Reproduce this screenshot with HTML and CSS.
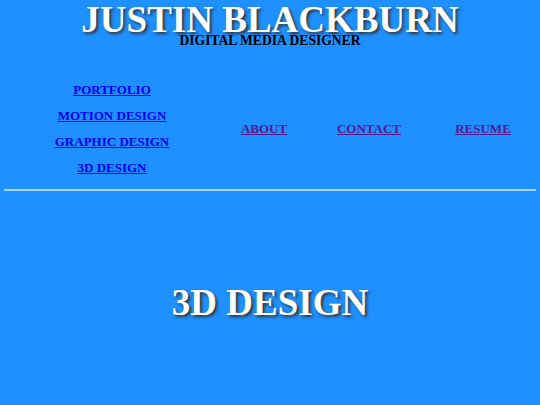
FILE: index.html
```html
<!DOCTYPE html>
<html>
<head>
<meta charset="utf-8">
<link rel="stylesheet" href="styles.css">
</head>
<body>
<header class="head">
  <h1 class="title">JUSTIN BLACKBURN</h1>
  <p class="subtitle">DIGITAL MEDIA DESIGNER</p>
</header>
<nav class="nav">
  <div class="col col-main">
    <a class="link" href="#portfolio">PORTFOLIO</a>
    <a class="link" href="#motion">MOTION DESIGN</a>
    <a class="link" href="#graphic">GRAPHIC DESIGN</a>
    <a class="link" href="#3d">3D DESIGN</a>
  </div>
  <div class="col"><a class="link visited" href="#about">ABOUT</a></div>
  <div class="col"><a class="link visited" href="#contact">CONTACT</a></div>
  <div class="col"><a class="link visited" href="#resume">RESUME</a></div>
</nav>
<hr class="rule">
<main class="main">
  <h2 class="section">3D DESIGN</h2>
</main>
</body>
</html>
```
FILE: styles.css
```css
html, body {
  margin: 0;
  padding: 0;
}
body {
  background: #1e90ff;
  font-family: "Liberation Serif", "Times New Roman", serif;
  font-weight: bold;
  padding: 0 4px;
}
.head {
  text-align: center;
  padding-top: 1px;
}
.title {
  margin: 0;
  font-size: 37px;
  line-height: 37px;
  color: #ffffff;
  text-shadow: 2px 2px 3px #333;
}
.subtitle {
  margin: 1px 0 0;
  font-size: 13.6px;
  line-height: 4px;
  color: #000;
}
.nav {
  display: grid;
  grid-template-columns: 216px 88px 122px 1fr;
  align-items: center;
  margin-top: 39px;
}
.col {
  display: flex;
  flex-direction: column;
  align-items: center;
  gap: 11px;
}
.link {
  font-size: 13px;
  line-height: 15px;
  color: #0000ee;
}
.link.visited {
  color: #551a8b;
}
.rule {
  margin: 14px 0 0;
  border: 0;
  height: 2px;
  background: #a7d2fb;
}
.main {
  text-align: center;
}
.section {
  margin: 91px 0 0;
  font-size: 37px;
  line-height: 42px;
  color: #ffffff;
  text-shadow: 2px 2px 3px #333;
}
```
